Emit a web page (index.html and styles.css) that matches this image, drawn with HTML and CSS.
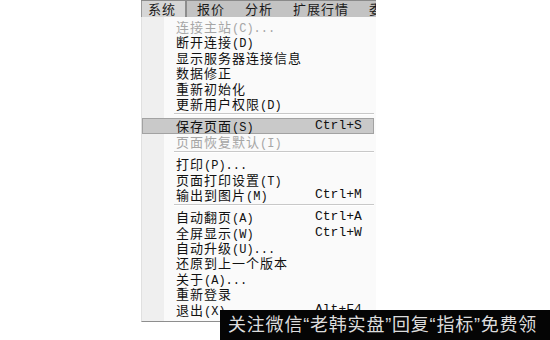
FILE: index.html
```html
<!DOCTYPE html>
<html lang="zh-CN">
  <head>
    <meta charset="UTF-8" />
    <meta name="viewport" content="width=device-width, initial-scale=1.0" />
    <title>系统菜单</title>
    <link rel="stylesheet" href="styles.css">
  </head>
  <body>
    <div class="app">
      <div class="menubar">
        <div class="menubar-item active">系统</div>
        <div class="menubar-item">报价</div>
        <div class="menubar-item">分析</div>
        <div class="menubar-item">扩展行情</div>
        <div class="menubar-item">委托</div>
      </div>

      <div class="dropdown">
        <div class="item disabled"><span class="label">连接主站<span class="acc">(C)...</span></span></div>
        <div class="item"><span class="label">断开连接<span class="acc">(D)</span></span></div>
        <div class="item"><span class="label">显示服务器连接信息</span></div>
        <div class="item"><span class="label">数据修正</span></div>
        <div class="item"><span class="label">重新初始化</span></div>
        <div class="item"><span class="label">更新用户权限<span class="acc">(D)</span></span></div>
        <div class="sep"></div>
        <div class="item hover"><span class="label">保存页面<span class="acc">(S)</span></span><span class="key">Ctrl+S</span></div>
        <div class="item disabled"><span class="label">页面恢复默认<span class="acc">(I)</span></span></div>
        <div class="sep"></div>
        <div class="item"><span class="label">打印<span class="acc">(P)...</span></span></div>
        <div class="item"><span class="label">页面打印设置<span class="acc">(T)</span></span></div>
        <div class="item"><span class="label">输出到图片<span class="acc">(M)</span></span><span class="key">Ctrl+M</span></div>
        <div class="sep"></div>
        <div class="item"><span class="label">自动翻页<span class="acc">(A)</span></span><span class="key">Ctrl+A</span></div>
        <div class="item"><span class="label">全屏显示<span class="acc">(W)</span></span><span class="key">Ctrl+W</span></div>
        <div class="item"><span class="label">自动升级<span class="acc">(U)...</span></span></div>
        <div class="item"><span class="label">还原到上一个版本</span></div>
        <div class="item"><span class="label">关于<span class="acc">(A)...</span></span></div>
        <div class="item"><span class="label">重新登录</span></div>
        <div class="item"><span class="label">退出<span class="acc">(X)</span></span><span class="key">Alt+F4</span></div>
      </div>
    </div>

    <div class="banner">关注微信“老韩实盘”回复“指标”免费领</div>
  </body>
</html>
```

FILE: styles.css
```css
body {
  margin: 0;
  background-color: #ffffff;
  font-family: "Noto Sans CJK SC", sans-serif;
  color: #111111;
}

.app {
  width: 235px;
  margin-left: 141px;
}

.menubar {
  display: flex;
  height: 16px;
  overflow: hidden;
  background-color: #c3c3c3;
  border-top: 1px solid #8a8a8a;
  white-space: nowrap;
}

.menubar-item {
  padding: 0 13px 0 7px;
  font-size: 13px;
  line-height: 16px;
  letter-spacing: 1px;
  color: #1a1a1a;
}

.menubar-item.active {
  background-color: #d6d6d6;
  border-left: 1px solid #9a9a9a;
  border-right: 2px solid #8c8c8c;
  padding: 0 9px 0 6px;
  margin-right: 3px;
}

.dropdown {
  background: linear-gradient(to right, #efefef 0, #efefef 22px, #fafafa 22px);
  border-left: 1px solid #e0e0e0;
  border-bottom: 1px solid #8e8e8e;
  box-shadow: 0 1px 0 #cfcfcf;
  padding: 2px 0 4px;
}

.item {
  box-sizing: border-box;
  display: flex;
  height: 15.4px;
  margin-right: 2px;
  padding: 0 10px 0 33px;
  font-size: 13px;
  line-height: 13px;
  letter-spacing: 1px;
  border: 1px solid transparent;
}

.item .label {
  flex: 1;
  white-space: nowrap;
}

.acc {
  font-family: "Liberation Mono", monospace;
  font-size: 12px;
  letter-spacing: 0;
}

.key {
  width: 48px;
  font-family: "Liberation Mono", monospace;
  font-size: 13px;
  letter-spacing: 0;
}

.item.hover {
  background-color: #c9c9c9;
  border-color: #a2a2a2;
}

.item.disabled {
  color: #a6a6a6;
}

.sep {
  height: 1px;
  margin: 2px 2px 3px 32px;
  background-color: #c8c8c8;
  border-bottom: 1px solid #ffffff;
}

.banner {
  position: absolute;
  left: 220px;
  top: 310px;
  right: 0;
  bottom: 0;
  background-color: #050505;
  color: #dcdcdc;
  font-family: "Liberation Sans", "Noto Sans CJK SC", sans-serif;
  font-size: 18px;
  line-height: 30px;
  padding-left: 8px;
  letter-spacing: 0.8px;
  white-space: nowrap;
  overflow: hidden;
}
```
